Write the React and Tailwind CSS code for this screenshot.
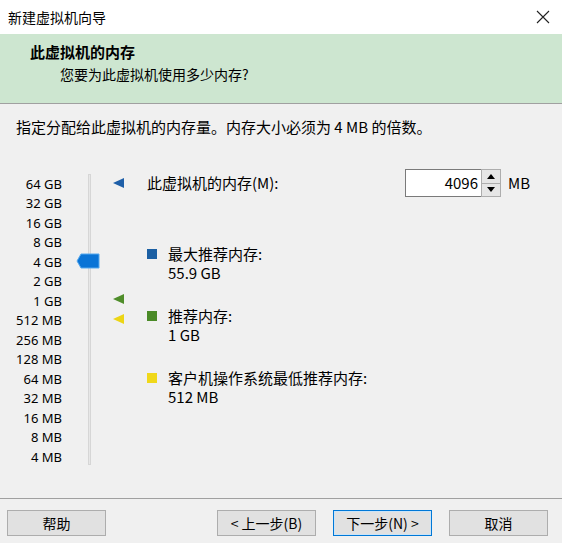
import React from "react";

const labels = ["64 GB","32 GB","16 GB","8 GB","4 GB","2 GB","1 GB","512 MB","256 MB","128 MB","64 MB","32 MB","16 MB","8 MB","4 MB"];

function Tri({ color, top }) {
  return (
    <svg className="absolute" style={{ top, left: 0 }} width="12" height="12" viewBox="0 0 12 12">
      <polygon points="0,6 11,1 11,11" fill={color} />
    </svg>
  );
}

function Btn({ children, active }) {
  return (
    <div className={"w-[99px] h-[26px] flex items-center justify-center text-[14px] text-[#000] bg-[#e1e1e1] border " + (active ? "border-[#0078d7] shadow-[inset_0_0_0_1px_#cce4f7]" : "border-[#adadad]")}>
      {children}
    </div>
  );
}

export default function App() {
  return (
    <div className="w-[562px] h-[543px] bg-[#f0f0f0] flex flex-col overflow-hidden" style={{ fontFamily: '"Noto Sans CJK SC", "Liberation Sans", sans-serif' }}>
      <div className="h-[34px] bg-white flex items-center justify-between pl-[8px] pr-[12px] shrink-0">
        <span className="text-[14px] text-[#000]">新建虚拟机向导</span>
        <svg width="14" height="14" viewBox="0 0 14 14"><path d="M1 1 L13 13 M13 1 L1 13" stroke="#222" strokeWidth="1.1" /></svg>
      </div>
      <div className="h-[70px] bg-[#cde6d0] border-b border-[#a0a0a0] shrink-0 pt-[8px] pl-[30px]">
        <div className="text-[15px] font-bold leading-[20px] text-[#000]">此虚拟机的内存</div>
        <div className="text-[14px] leading-[20px] pl-[30px] mt-[2px] text-[#000]">您要为此虚拟机使用多少内存?</div>
      </div>
      <div className="flex-1 flex flex-col">
        <div className="text-[15px] leading-[20px] pl-[16px] pt-[13px] text-[#000]">指定分配给此虚拟机的内存量。内存大小必须为 4 MB 的倍数。</div>
        <div className="flex mt-[34px] h-[300px]">
          <div className="w-[140px] shrink-0 flex">
            <div className="w-[62px] flex flex-col items-end pt-[3.5px] text-[13px] text-[#000]" style={{ fontFamily: '"Noto Sans", "Liberation Sans", sans-serif' }}>
              {labels.map((l) => (
                <div key={l} className="h-[19.5px] leading-[19.5px] whitespace-nowrap">{l}</div>
              ))}
            </div>
            <div className="relative w-[78px] h-full">
              <div className="absolute left-[26px] top-[3px] w-[3px] h-[291px] bg-[#e7e7e7] border border-[#d6d6d6]" />
              <svg className="absolute" style={{ left: 14, top: 82 }} width="24" height="16" viewBox="0 0 24 16">
                <path d="M5 1 H23 V15 H5 L1 8 Z" fill="#0a74d6" stroke="#57a9ee" strokeWidth="1" />
              </svg>
              <div className="absolute left-[51px] top-0 w-[12px] h-full">
                <Tri color="#1e5fa8" top={6} />
                <Tri color="#4f8d2a" top={122} />
                <Tri color="#ecd515" top={142} />
              </div>
            </div>
          </div>
          <div className="flex-1 flex flex-col pl-[7px]">
            <div className="flex items-center h-[28px] -mt-[2px]">
              <span className="text-[15px] text-[#000] w-[258px]">此虚拟机的内存(M):</span>
              <div className="w-[76px] h-[28px] bg-white border border-[#7a7a7a] border-r-0 flex items-center justify-end pr-[3px] text-[15px] text-[#000]">4096</div>
              <div className="w-[20px] h-[28px] border border-[#adadad] bg-[#f0f0f0] flex flex-col">
                <div className="flex-1 flex items-center justify-center border-b border-[#adadad] bg-[#e6e6e6]">
                  <svg width="8" height="5" viewBox="0 0 8 5"><polygon points="0,5 8,5 4,0" fill="#000" /></svg>
                </div>
                <div className="flex-1 flex items-center justify-center bg-[#e6e6e6]">
                  <svg width="8" height="5" viewBox="0 0 8 5"><polygon points="0,0 8,0 4,5" fill="#000" /></svg>
                </div>
              </div>
              <span className="ml-[7px] text-[15px] text-[#000]">MB</span>
            </div>
            <div className="mt-[47px] flex flex-col gap-[24px] text-[15px] text-[#000]">
              <div className="flex">
                <div className="w-[10px] h-[10px] bg-[#1b5fa3] mt-[5px] mr-[11px]" />
                <div className="leading-[19px]"><div>最大推荐内存:</div><div>55.9 GB</div></div>
              </div>
              <div className="flex">
                <div className="w-[10px] h-[10px] bg-[#4a8a27] mt-[5px] mr-[11px]" />
                <div className="leading-[19px]"><div>推荐内存:</div><div>1 GB</div></div>
              </div>
              <div className="flex">
                <div className="w-[10px] h-[10px] bg-[#f0d81a] mt-[5px] mr-[11px]" />
                <div className="leading-[19px]"><div>客户机操作系统最低推荐内存:</div><div>512 MB</div></div>
              </div>
            </div>
          </div>
        </div>
      </div>
      <div className="border-t border-[#a0a0a0] h-[45px] shrink-0 flex items-start pt-[11px] pl-[7px]">
        <Btn>帮助</Btn>
        <div className="ml-[111px]"><Btn>&lt; 上一步(B)</Btn></div>
        <div className="ml-[17px]"><Btn active>下一步(N) &gt;</Btn></div>
        <div className="ml-[17px]"><Btn>取消</Btn></div>
      </div>
    </div>
  );
}
